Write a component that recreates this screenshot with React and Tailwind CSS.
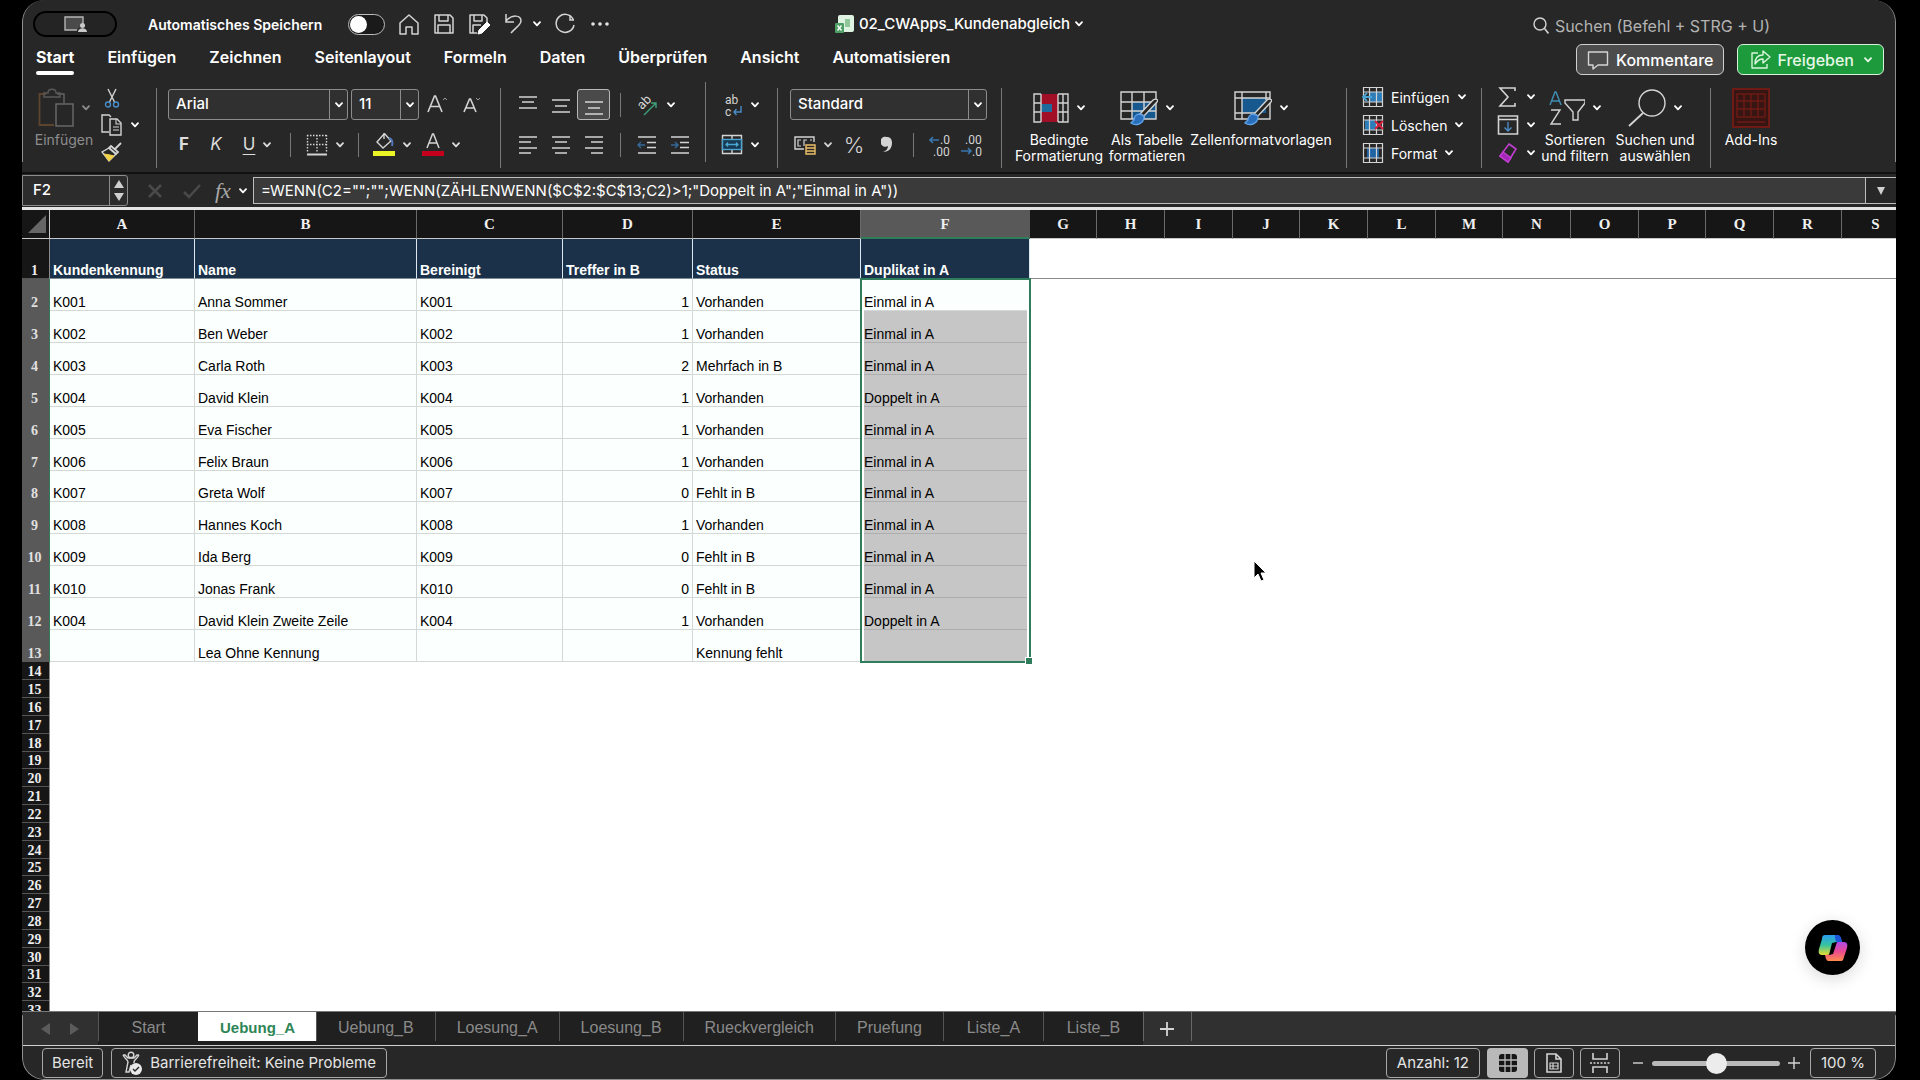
import { useState } from 'react'
import clsx from 'clsx'

const TABS = ['Start', 'Einfügen', 'Zeichnen', 'Seitenlayout', 'Formeln', 'Daten', 'Überprüfen', 'Ansicht', 'Automatisieren']

const SHEETS = ['Start', 'Uebung_A', 'Uebung_B', 'Loesung_A', 'Loesung_B', 'Rueckvergleich', 'Pruefung', 'Liste_A', 'Liste_B']

const COLUMNS = [
  { name: 'A', width: 'w-[145px]' },
  { name: 'B', width: 'w-[222px]' },
  { name: 'C', width: 'w-[146px]' },
  { name: 'D', width: 'w-[130px]' },
  { name: 'E', width: 'w-[168px]' },
  { name: 'F', width: 'w-[169px]' },
  { name: 'G', width: 'w-[67px]' },
  { name: 'H', width: 'w-[68px]' },
  { name: 'I', width: 'w-[68px]' },
  { name: 'J', width: 'w-[67px]' },
  { name: 'K', width: 'w-[68px]' },
  { name: 'L', width: 'w-[68px]' },
  { name: 'M', width: 'w-[67px]' },
  { name: 'N', width: 'w-[68px]' },
  { name: 'O', width: 'w-[68px]' },
  { name: 'P', width: 'w-[67px]' },
  { name: 'Q', width: 'w-[68px]' },
  { name: 'R', width: 'w-[68px]' },
  { name: 'S', width: 'w-[68px]' },
]

const HEADINGS = ['Kundenkennung', 'Name', 'Bereinigt', 'Treffer in B', 'Status', 'Duplikat in A']

const ROWS = [
  ['K001', 'Anna Sommer', 'K001', '1', 'Vorhanden', 'Einmal in A'],
  ['K002', 'Ben Weber', 'K002', '1', 'Vorhanden', 'Einmal in A'],
  ['K003', 'Carla Roth', 'K003', '2', 'Mehrfach in B', 'Einmal in A'],
  ['K004', 'David Klein', 'K004', '1', 'Vorhanden', 'Doppelt in A'],
  ['K005', 'Eva Fischer', 'K005', '1', 'Vorhanden', 'Einmal in A'],
  ['K006', 'Felix Braun', 'K006', '1', 'Vorhanden', 'Einmal in A'],
  ['K007', 'Greta Wolf', 'K007', '0', 'Fehlt in B', 'Einmal in A'],
  ['K008', 'Hannes Koch', 'K008', '1', 'Vorhanden', 'Einmal in A'],
  ['K009', 'Ida Berg', 'K009', '0', 'Fehlt in B', 'Einmal in A'],
  ['K010', 'Jonas Frank', 'K010', '0', 'Fehlt in B', 'Einmal in A'],
  ['K004', 'David Klein Zweite Zeile', 'K004', '1', 'Vorhanden', 'Doppelt in A'],
  ['', 'Lea Ohne Kennung', '', '', 'Kennung fehlt', ''],
]

const EMPTY_ROWS = Array.from({ length: 20 }, (_, i) => i + 14)

/* ═══════════════════════════════════════════════════════════
   ICONS
   ═══════════════════════════════════════════════════════════ */
function Svg({ w = 22, h = 22, children, className }) {
  return (
    <svg width={w} height={h} viewBox={`0 0 ${w} ${h}`} fill="none" stroke="#d4d4d4" strokeWidth="1.4" className={clsx('shrink-0', className)} aria-hidden="true">
      {children}
    </svg>
  )
}

function Chevron({ className }) {
  return (
    <svg width="8" height="6" viewBox="0 0 8 6" fill="none" stroke="currentColor" strokeWidth="1.8" strokeLinecap="round" strokeLinejoin="round" className={clsx('shrink-0', className)} aria-hidden="true">
      <path d="M1 1.2 4 4.4 7 1.2" />
    </svg>
  )
}

function LinesIcon({ rows }) {
  return (
    <Svg w={20} h={20}>
      {rows.map(([x1, x2, y]) => <path key={y} d={`M${x1} ${y}H${x2}`} strokeWidth="1.5" />)}
    </Svg>
  )
}

function PasteIcon() {
  return (
    <Svg w={36} h={40} className="opacity-50">
      <path d="M8 6H1.5V37H16" stroke="#946237" strokeWidth="1.8" />
      <path d="M19 6h7v9" stroke="#a0a0a0" />
      <path d="M6 9V5h4c0-5 8-5 8 0h4v4z" stroke="#8a8a8a" />
      <rect x="18" y="16" width="17" height="22" stroke="#b0b0b0" />
    </Svg>
  )
}

function CutIcon() {
  return (
    <Svg w={16} h={20}>
      <path d="M4 1 10.500 14M12 1 5.500 14" />
      <circle cx="4" cy="16.500" r="2.500" stroke="#4a8cc7" />
      <circle cx="12" cy="16.500" r="2.500" stroke="#4a8cc7" />
    </Svg>
  )
}

function CopyIcon() {
  return (
    <Svg w={22} h={22}>
      <path d="M8 18H1V1h7l2 2" />
      <path d="M9 5h7l4 4v12H9z" />
      <path d="M15 5v5h5M12 13h6M12 16h6" strokeWidth="1.1" />
    </Svg>
  )
}

function BrushIcon() {
  return (
    <Svg w={22} h={20}>
      <path d="M20 1 14 7M10 4l7 6-2 2-7-6z" strokeWidth="1.8" />
      <path d="M8 6 1 10l7 9 7-7z" />
      <path d="M3 12l6 1 4 1-5 5z" fill="#f2d14a" stroke="#f2d14a" strokeWidth="1" />
    </Svg>
  )
}

function GrowFontIcon({ small }) {
  return (
    <Svg w={22} h={22}>
      {small ? <path d="M4 18 9.500 5h1L16 18M6 14h8" strokeWidth="1.6" /> : <path d="M1 18 7.500 2h1L15 18M3.500 12.500h9" strokeWidth="1.6" />}
      {small ? <path d="M16 4l2 2 2-2" strokeWidth="1" stroke="#9a9a9a" /> : <path d="M16 6l2-2 2 2" strokeWidth="1" stroke="#9a9a9a" />}
    </Svg>
  )
}

function BordersIcon() {
  return (
    <Svg w={22} h={22}>
      <path d="M1.500 1v18M20.500 1v18M11 1v18M1 1.500h20M1 10.500h20" strokeDasharray="1.500 1.500" />
      <path d="M1 20.500h20" strokeWidth="2" />
    </Svg>
  )
}

function FillIcon() {
  return (
    <Svg w={22} h={24}>
      <path d="M11 1 4 9l6 6 8-7-7-8v6" />
      <path d="M16 5c3 1 4 4 3 8" stroke="#5276b8" strokeWidth="2" />
      <rect x="0" y="18" width="22" height="5" fill="#ebf525" stroke="none" />
    </Svg>
  )
}

function FontColorIcon() {
  return (
    <Svg w={22} h={24}>
      <path d="M5 15 10.500 1h1L17 15M7 10h8" strokeWidth="1.500" />
      <rect x="0" y="18" width="22" height="5" fill="#c4001d" stroke="none" />
    </Svg>
  )
}

function OrientationIcon() {
  return (
    <Svg w={24} h={24}>
      <text x="10" y="13" textAnchor="middle" transform="rotate(-45 10 10)" fill="#d4d4d4" stroke="none" fontFamily="Roboto" fontSize="13">ab</text>
      <path d="M9 22 21 10M21 15v-5h-5" stroke="#3da17a" />
    </Svg>
  )
}

function WrapIcon() {
  return (
    <Svg w={22} h={26}>
      <g fill="#d4d4d4" stroke="none" fontFamily="Roboto" fontSize="12">
        <text x="4" y="12">ab</text>
        <text x="4" y="24">c</text>
      </g>
      <path d="M20 14v6h-7M15.500 17 13 20l2.500 3" stroke="#4a8cc7" />
    </Svg>
  )
}

function IndentIcon({ out }) {
  return (
    <Svg w={20} h={20}>
      <path d="M1 2h18M10 7.500h9M10 12.500h9M1 18h18" />
      {out ? <path d="M8 10H1M4 7l-3 3 3 3" stroke="#35699a" /> : <path d="M1 10h7M5 7l3 3-3 3" stroke="#35699a" />}
    </Svg>
  )
}

function MergeIcon() {
  return (
    <Svg w={22} h={22}>
      <path d="M1.500 1.500h19v18h-19zM11 1.500v4M11 15.500v4" />
      <rect x="1.500" y="5.500" width="19" height="10" fill="#173a52" stroke="#4aa3d1" />
      <path d="M5 10.500h12M7 8.500l-2 2 2 2M15 8.500l2 2-2 2" stroke="#4aa3d1" />
    </Svg>
  )
}

function CurrencyIcon() {
  return (
    <Svg w={22} h={22}>
      <path d="M10 15H1V3h19v5" />
      <path d="M7 6H4v6h3M13 6h-3v6M16 6h2" strokeWidth="1.200" />
      <path d="M12 11h9v9h-9zM12 14h9M12 17h9" stroke="#eec067" />
    </Svg>
  )
}

function DecimalIcon({ less }) {
  return (
    <svg width="22" height="26" viewBox="0 0 22 26" className="shrink-0" aria-hidden="true">
      <g fill="#d4d4d4" fontFamily="Roboto" fontSize="12">
        <text x={less ? 4 : 11} y="12">{less ? '.00' : '.0'}</text>
        <text x={less ? 11 : 4} y="24">{less ? '.0' : '.00'}</text>
      </g>
      {less
        ? <path d="M0 19h10M7 16l3 3-3 3" fill="none" stroke="#3a75ad" strokeWidth="1.600" />
        : <path d="M10 8H1M4 5 1 8l3 3" fill="none" stroke="#3a75ad" strokeWidth="1.600" />}
    </svg>
  )
}

function CondFormatIcon() {
  return (
    <Svg w={36} h={32}>
      <rect x="8" y="2" width="17" height="28" fill="#a10f26" stroke="none" />
      <rect x="8" y="12" width="11" height="8" fill="#1f6a9c" stroke="none" />
      <path d="M8 2H1v28h7M25 2h10v28H25M1 11h7M25 11h10M1 20h7M25 20h10M8 2v28M25 2v28M30 2v28" />
    </Svg>
  )
}

function TableFormatIcon({ styles }) {
  return (
    <Svg w={38} h={36}>
      {styles
        ? <path d="M8 8h24v15H8z" fill="#17588f" stroke="none" />
        : <path d="M12 12h24v17H12z" fill="#17588f" stroke="none" />}
      <path d={styles ? 'M1 2h35v27H1zM1 8h35M1 23h24M8 2v27M32 2v8' : 'M1 2h35v27H1zM1 12h35M1 21h35M12 2v27M24 2v27'} />
      <path d="M37 12 24 26l-4-2L33 10c3-2 6 0 4 2z" fill="#262626" />
      <path d="M20 24c-4 0-6 3-6 6l-3 3c4 3 13 2 13-7z" fill="#2a6fbb" stroke="#5ea1e6" />
    </Svg>
  )
}

function CellsIcon({ kind }) {
  return (
    <Svg w={22} h={22}>
      {kind === 'insert' && <path d="M8 6h12v10H8z" fill="#2d7db8" stroke="none" />}
      {kind === 'delete' && <path d="M3 6h11v10H3z" fill="#2d7db8" stroke="none" />}
      {kind === 'format' && <path d="M5 6h12v10H5z" fill="#1f63a3" stroke="none" />}
      <path d="M1.500 1.500h19v19h-19zM1 6h20M1 16h20M7.500 1v20M14.500 1v20" strokeWidth="1.200" />
      {kind === 'insert' && <path d="M10 11H1M5 7l-4 4 4 4" stroke="#4aa3d1" strokeWidth="1.800" />}
      {kind === 'delete' && <path d="M13 7l8 8M21 7l-8 8" stroke="#d3213c" strokeWidth="2" />}
    </Svg>
  )
}

function SigmaIcon() {
  return <Svg w={22} h={22}><path d="M18 5V2H3l8 9-8 9h15v-3" strokeWidth="1.600" /></Svg>
}

function FillDownIcon() {
  return (
    <Svg w={22} h={22}>
      <path d="M1.500 2h19v18h-19zM1.500 5.500h19" strokeWidth="1.600" />
      <path d="M11 8v9M7.500 13.500 11 17l3.500-3.500" stroke="#4a8cc7" />
    </Svg>
  )
}

function EraserIcon() {
  return (
    <Svg w={22} h={22}>
      <path d="M12 2l7 5-8 13-8-6z" stroke="#c13fd0" strokeWidth="1.600" />
      <path d="M6 10l8 6-3 4-8-6z" fill="#a526b8" stroke="#c13fd0" />
    </Svg>
  )
}

function SortFilterIcon() {
  return (
    <Svg w={36} h={36}>
      <path d="M1 15 6 2h1l5 13M3 11h7" stroke="#3f8fb5" />
      <path d="M2 20h9L2 34h10" />
      <path d="M16 10h20v3l-7 9v8h-5v-8l-8-9z" />
    </Svg>
  )
}

function FindIcon() {
  return (
    <Svg w={38} h={38}>
      <circle cx="24" cy="14" r="13" />
      <path d="M15 24 1 37" strokeWidth="1.800" />
    </Svg>
  )
}

function AddInsIcon() {
  return (
    <Svg w={38} h={40}>
      <g stroke="#6e1a15">
        <rect x="1" y="1" width="36" height="38" fill="#361513" strokeWidth="2" />
        <rect x="5" y="6" width="28" height="23" />
        <path d="M5 13h28M5 21h28M12 6v23M19 6v23M26 6v23M5 34h28" />
      </g>
    </Svg>
  )
}

function CopilotIcon() {
  return (
    <svg width="30" height="28" viewBox="0 0 30 28" aria-hidden="true">
      <defs>
        <linearGradient id="cp-left" x1="0" y1="0" x2="0" y2="1">
          <stop offset="0" stopColor="#2a9df0" />
          <stop offset="0.5" stopColor="#35c3a0" />
          <stop offset="1" stopColor="#e6dc2f" />
        </linearGradient>
        <linearGradient id="cp-right" x1="0" y1="0" x2="0" y2="1">
          <stop offset="0" stopColor="#b04be8" />
          <stop offset="0.5" stopColor="#ea4a8e" />
          <stop offset="1" stopColor="#ff8a4c" />
        </linearGradient>
      </defs>
      <path d="M7 1h12c2 0 3 1 4 4l1 3h-5c-2 0-3 1-4 3l-2 7c-1 2-2 3-4 3H5c-4 0-5-2-4-6L4 5c0-3 1-4 3-4z" fill="url(#cp-left)" />
      <path d="M17 1h3c2 0 3 2 4 7h-4c-2 0-3-1-3-7z" fill="#1b55d8" />
      <path d="M23 27H11c-2 0-3-1-4-6h3c2 0 3-1 4-3l3-7c0-2 1-3 3-3h5c4 0 5 2 4 6l-3 9c-1 3-1 4-3 4z" fill="url(#cp-right)" />
      <path d="m14 9 5-1-4 12-4 1z" fill="#000" />
    </svg>
  )
}

/* ═══════════════════════════════════════════════════════════
   RIBBON PARTS
   ═══════════════════════════════════════════════════════════ */
function Divider({ short, className }) {
  return <span className={clsx('w-px shrink-0 bg-[#777]', short ? 'h-6' : 'h-20', className)} />
}

function IconButton({ label, menu, className, children }) {
  return (
    <button type="button" aria-label={label} className={clsx('flex shrink-0 items-center justify-center gap-2', className)}>
      {children}
      {menu && <Chevron />}
    </button>
  )
}

function BigButton({ lines, menu = true, className, children }) {
  return (
    <button type="button" className={clsx('flex shrink-0 flex-col items-center text-[14px] leading-[16px] whitespace-nowrap', className)}>
      <span className="mb-1 flex h-10 items-center gap-2">
        {children}
        {menu && <Chevron />}
      </span>
      {lines.map((line) => <span key={line}>{line}</span>)}
    </button>
  )
}

function Combo({ label, value, className }) {
  return (
    <div className={clsx('relative h-[31px] shrink-0', className)}>
      <select aria-label={label} defaultValue={value} className="h-full w-full appearance-none rounded-[3px] border border-[#8c8c8c] bg-[#303030] pl-[7px] text-[15px] font-medium text-white outline-none">
        <option>{value}</option>
      </select>
      <span className="pointer-events-none absolute inset-y-0 right-0 flex w-[19px] items-center justify-center border-l border-[#8c8c8c]">
        <Chevron />
      </span>
    </div>
  )
}

function TitleBar() {
  const [autoSave, setAutoSave] = useState(false)

  return (
    <header className="grid h-11 shrink-0 grid-cols-[1fr_auto_1fr] items-center pt-1">
      <div className="flex items-center">
        <span className="ml-[11px] flex h-[26px] w-[84px] items-center justify-center rounded-full border-2 border-black bg-[#242424]">
          <Svg w={24} h={18}>
            <path d="M14 15H2V2h18v7" fill="#4a4a4a" stroke="#b5b5b5" />
            <circle cx="19.500" cy="10.500" r="2.500" fill="#c9c9c9" stroke="none" />
            <path d="M15 17c0-5 9-5 9 0z" fill="#c9c9c9" stroke="none" />
          </Svg>
        </span>
        <label className="ml-[31px] flex items-center gap-[26px] text-[14px] font-semibold">
          Automatisches Speichern
          <input type="checkbox" checked={autoSave} onChange={(e) => setAutoSave(e.target.checked)} className="peer sr-only" />
          <span className="flex h-[21px] w-[37px] items-center rounded-full border border-[#bdbdbd] bg-[#1a1a1a] px-px">
            <span className={clsx('size-[17px] rounded-full bg-white', autoSave && 'ml-auto')} />
          </span>
        </label>
        <div className="ml-[13px] flex items-center gap-[13px]">
          <IconButton label="Startseite">
            <Svg><path d="M2 10 11 2l9 8v11h-6v-7H8v7H2z" strokeWidth="1.500" strokeLinejoin="round" /></Svg>
          </IconButton>
          <IconButton label="Speichern">
            <Svg>
              <path d="M2 2h15l3 3v15H2zM6 2v6h9V2M5 20v-8h12v8" strokeWidth="1.500" strokeLinejoin="round" />
            </Svg>
          </IconButton>
          <IconButton label="Speichern unter">
            <Svg>
              <path d="M9 20H2V2h14l3 3v4M6 2v6h8V2M5 20v-8h8" strokeWidth="1.500" strokeLinejoin="round" />
              <path d="M10 21l1-4 8-8 3 3-8 8z" fill="#fff" stroke="#fff" strokeWidth="1" />
            </Svg>
          </IconButton>
          <IconButton label="Rückgängig" menu>
            <Svg><path d="M3 1v8h8M3 8c6-7 15-6 15 0 0 4-6 7-10 12" strokeWidth="1.500" /></Svg>
          </IconButton>
          <IconButton label="Wiederholen">
            <Svg><path d="M16 2v5h4M19.500 7A9 9 0 1 0 20 12" strokeWidth="1.500" /></Svg>
          </IconButton>
          <IconButton label="Mehr">
            <Svg>
              <g fill="#e5e5e5" stroke="none">
                <circle cx="4" cy="11" r="1.800" />
                <circle cx="11" cy="11" r="1.800" />
                <circle cx="18" cy="11" r="1.800" />
              </g>
            </Svg>
          </IconButton>
        </div>
      </div>

      <button type="button" className="flex items-center gap-[5px] text-[15px] font-medium">
        <svg width="19" height="18" viewBox="0 0 19 18" aria-hidden="true">
          <rect x="3" y="0" width="16" height="17" rx="2" fill="#dff3e3" />
          <rect x="10" y="4" width="5" height="8" fill="#8fc79b" />
          <rect x="0" y="8" width="9" height="10" rx="1" fill="#4d9e62" />
          <path d="m2.500 10.500 4 5M6.500 10.500l-4 5" stroke="#fff" strokeWidth="1.300" />
        </svg>
        <span>02_CWApps_Kundenabgleich</span>
        <Chevron />
      </button>

      <button type="button" className="mr-[126px] flex items-center gap-[6px] justify-self-end pt-1 text-[16px] text-[#b3b3b3]">
        <Svg w={16} h={18}><circle cx="7" cy="7" r="6" /><path d="m11.500 11.500 4 5" strokeWidth="1.600" /></Svg>
        Suchen (Befehl + STRG + U)
      </button>
    </header>
  )
}

function TabBar() {
  return (
    <div className="flex h-[38px] shrink-0 items-start justify-between pr-3 pl-[14px]">
      <nav className="flex gap-[33px] text-[16px] leading-[26px] font-semibold">
        {TABS.map((tab, i) => (
          <a key={tab} href="#ribbon" className={clsx('flex flex-col', i === 0 && 'font-bold')}>
            {tab}
            {i === 0 && <span className="mt-px h-1 rounded-full bg-white" />}
          </a>
        ))}
      </nav>
      <div className="flex gap-[13px] text-[16px] font-medium">
        <button type="button" className="flex h-[31px] items-center gap-[7px] rounded-[6px] border border-[#d0d0d0] bg-[#4c4c4c] px-[10px]">
          <Svg w={22} h={20}><path d="M1.500 2h19v13H11l-5 4v-4H1.500z" strokeLinejoin="round" /></Svg>
          Kommentare
        </button>
        <button type="button" className="flex h-[31px] items-center gap-[6px] rounded-[6px] border border-[#d6f0da] bg-[#1c9a3c] px-[11px] text-[#e6f7e6]">
          <Svg w={22} h={20}>
            <g stroke="#d9f5dc" strokeLinejoin="round">
              <path d="M9 3H3v15h15v-4" />
              <path d="M14 1l7 6-7 6V9c-4 0-6 2-8 5 0-6 3-9 8-9z" />
            </g>
          </Svg>
          Freigeben
          <Chevron className="ml-1" />
        </button>
      </div>
    </div>
  )
}

function Ribbon() {
  return (
    <section id="ribbon" aria-label="Start" className="flex h-[90px] shrink-0 items-start pt-[6px]">
      {/* Clipboard */}
      <BigButton lines={['Einfügen']} className="ml-[13px] w-[58px] text-[#8d8d8d]">
        <PasteIcon />
      </BigButton>
      <div className="mr-[15px] ml-2 flex w-[40px] flex-col items-start gap-[6px]">
        <IconButton label="Ausschneiden" className="w-[22px]"><CutIcon /></IconButton>
        <IconButton label="Kopieren" menu><CopyIcon /></IconButton>
        <IconButton label="Format übertragen" className="w-[22px]"><BrushIcon /></IconButton>
      </div>
      <Divider />

      {/* Font */}
      <div className="flex w-[343px] flex-col gap-[10px] pt-px pl-[11px]">
        <div className="flex items-center gap-[3px]">
          <Combo label="Schriftart" value="Arial" className="w-[180px]" />
          <Combo label="Schriftgrad" value="11" className="w-[68px]" />
          <IconButton label="Schriftart vergrößern" className="w-8"><GrowFontIcon /></IconButton>
          <IconButton label="Schriftart verkleinern" className="w-7"><GrowFontIcon small /></IconButton>
        </div>
        <div className="flex h-[30px] items-center text-[17px] text-[#dcdcdc]">
          <IconButton label="Fett" className="w-8 font-bold">F</IconButton>
          <IconButton label="Kursiv" className="w-8 italic">K</IconButton>
          <IconButton label="Unterstrichen" menu className="w-[46px] pl-1"><span className="underline underline-offset-4">U</span></IconButton>
          <span className="mr-[15px] ml-3 flex"><Divider short /></span>
          <IconButton label="Rahmen" menu><BordersIcon /></IconButton>
          <span className="mx-[14px] flex"><Divider short /></span>
          <IconButton label="Füllfarbe" menu><FillIcon /></IconButton>
          <IconButton label="Schriftfarbe" menu className="ml-[11px]"><FontColorIcon /></IconButton>
        </div>
      </div>
      <Divider />

      {/* Alignment */}
      <div className="flex w-[204px] flex-col gap-[10px] pt-px pl-[10px]">
        <div className="flex h-[31px] items-center">
          <IconButton label="Oben ausrichten" className="w-[33px]"><LinesIcon rows={[[1, 19, 2], [4, 16, 7], [1, 19, 13]]} /></IconButton>
          <IconButton label="Zentriert ausrichten" className="w-[33px]"><LinesIcon rows={[[1, 19, 5], [4, 16, 11], [1, 19, 17]]} /></IconButton>
          <IconButton label="Unten ausrichten" className="h-[31px] w-[33px] rounded-[3px] border border-[#b8b8b8] bg-[#4a4a4a]"><LinesIcon rows={[[1, 19, 7], [4, 16, 13], [1, 19, 19]]} /></IconButton>
          <span className="mr-[14px] ml-[10px] flex"><Divider short /></span>
          <IconButton label="Ausrichtung" menu><OrientationIcon /></IconButton>
        </div>
        <div className="flex h-[30px] items-center">
          <IconButton label="Linksbündig" className="w-[33px]"><LinesIcon rows={[[1, 19, 2], [1, 13, 7], [1, 19, 13], [1, 13, 18]]} /></IconButton>
          <IconButton label="Zentriert" className="w-[33px]"><LinesIcon rows={[[1, 19, 2], [4, 16, 7], [1, 19, 13], [4, 16, 18]]} /></IconButton>
          <IconButton label="Rechtsbündig" className="w-[33px]"><LinesIcon rows={[[1, 19, 2], [7, 19, 7], [1, 19, 13], [7, 19, 18]]} /></IconButton>
          <span className="mr-4 ml-[10px] flex"><Divider short /></span>
          <IconButton label="Einzug verkleinern"><IndentIcon out /></IconButton>
          <IconButton label="Einzug vergrößern" className="ml-[13px]"><IndentIcon /></IconButton>
        </div>
      </div>
      <Divider className="-mt-[6px]" />
      <div className="flex w-[71px] flex-col gap-[10px] pt-px pl-[15px]">
        <IconButton label="Textumbruch" menu className="h-[31px] self-start"><WrapIcon /></IconButton>
        <IconButton label="Verbinden und zentrieren" menu className="h-[30px] self-start"><MergeIcon /></IconButton>
      </div>
      <Divider />

      {/* Number */}
      <div className="flex w-[223px] flex-col gap-[10px] pt-px pl-3">
        <Combo label="Zahlenformat" value="Standard" className="w-[197px]" />
        <div className="flex h-[30px] items-center pl-1 text-[#d4d4d4]">
          <IconButton label="Währung" menu><CurrencyIcon /></IconButton>
          <IconButton label="Prozent" className="ml-[6px] w-8 text-[22px] font-light">%</IconButton>
          <IconButton label="Tausendertrennzeichen" className="w-[33px]">
            <Svg w={12} h={18}><path d="M6 1a5 5 0 1 0 1 9c0 3-2 5-5 6 6 0 9-4 9-9 0-4-2-6-5-6z" fill="#d4d4d4" stroke="none" /></Svg>
          </IconButton>
          <span className="mr-[15px] ml-[10px] flex"><Divider short /></span>
          <IconButton label="Dezimalstelle hinzufügen"><DecimalIcon /></IconButton>
          <IconButton label="Dezimalstelle entfernen" className="ml-[10px]"><DecimalIcon less /></IconButton>
        </div>
      </div>
      <Divider />

      {/* Styles */}
      <div className="mr-[15px] ml-[13px] flex gap-[6px]">
        <BigButton lines={['Bedingte', 'Formatierung']} className="w-[88px]"><CondFormatIcon /></BigButton>
        <BigButton lines={['Als Tabelle', 'formatieren']} className="w-[76px]"><TableFormatIcon /></BigButton>
        <BigButton lines={['Zellenformatvorlagen']} className="w-[140px]"><TableFormatIcon styles /></BigButton>
      </div>
      <Divider />

      {/* Cells */}
      <div className="-mt-[5px] flex w-[134px] flex-col pl-[15px] text-[14px]">
        {[['insert', 'Einfügen'], ['delete', 'Löschen'], ['format', 'Format']].map(([kind, label]) => (
          <button key={kind} type="button" className="flex h-7 items-center">
            <CellsIcon kind={kind} />
            <span className="mr-2 ml-[7px]">{label}</span>
            <Chevron />
          </button>
        ))}
      </div>
      <Divider />

      {/* Editing */}
      <div className="-mt-[5px] flex w-[58px] flex-col items-start pl-[15px]">
        <IconButton label="AutoSumme" menu className="h-7"><SigmaIcon /></IconButton>
        <IconButton label="Ausfüllen" menu className="h-7"><FillDownIcon /></IconButton>
        <IconButton label="Löschen" menu className="h-7"><EraserIcon /></IconButton>
      </div>
      <BigButton lines={['Sortieren', 'und filtern']} className="w-[70px]"><SortFilterIcon /></BigButton>
      <BigButton lines={['Suchen und', 'auswählen']} className="mr-[14px] ml-1 w-[82px]"><FindIcon /></BigButton>
      <Divider />
      <BigButton lines={['Add-Ins']} menu={false} className="ml-[13px] w-[54px]"><AddInsIcon /></BigButton>
    </section>
  )
}

function FormulaBar() {
  return (
    <div className="flex h-[38px] shrink-0 items-center border-t-2 border-b-3 border-t-[#111] border-b-[#e4e4e4]">
      <div className="flex h-[31px] w-[106px] items-stretch rounded-r-[3px] border border-[#8c8c8c] bg-[#2c2c2c]">
        <input aria-label="Namenfeld" defaultValue="F2" className="w-[86px] bg-transparent pl-[10px] text-[15px] font-medium outline-none" />
        <div className="flex flex-1 flex-col items-center justify-between border-l border-[#8c8c8c] py-1">
          <svg width="10" height="8" viewBox="0 0 10 8" fill="#d0d0d0" aria-hidden="true"><path d="M5 0l5 8H0z" /></svg>
          <svg width="10" height="8" viewBox="0 0 10 8" fill="#d0d0d0" aria-hidden="true"><path d="M5 8L0 0h10z" /></svg>
        </div>
      </div>
      <div className="flex w-[125px] items-center pl-[19px]">
        <IconButton label="Abbrechen"><Svg w={16} h={16}><path d="m2 2 12 12M14 2 2 14" stroke="#4a4a4a" strokeWidth="2.500" /></Svg></IconButton>
        <IconButton label="Eingeben" className="ml-5"><Svg w={18} h={16}><path d="m1 9 5 5L17 2" stroke="#4a4a4a" strokeWidth="2.500" /></Svg></IconButton>
        <IconButton label="Funktion einfügen" className="ml-[14px] font-['Liberation_Serif',serif] text-[22px] leading-[24px] text-[#a8a8a8] italic">fx</IconButton>
        <Chevron className="ml-2" />
      </div>
      <input
        aria-label="Bearbeitungsleiste"
        defaultValue={'=WENN(C2="";"";WENN(ZÄHLENWENN($C$2:$C$13;C2)>1;"Doppelt in A";"Einmal in A"))'}
        className="h-[27px] min-w-0 flex-1 border border-[#bdbdbd] bg-[#3a3a3a] pl-[7px] text-[15px] outline-none"
      />
      <button type="button" aria-label="Bearbeitungsleiste erweitern" className="flex h-[27px] w-[30px] items-center justify-center border-y border-[#bdbdbd]">
        <svg width="8" height="8" viewBox="0 0 8 8" fill="#d0d0d0" aria-hidden="true"><path d="M4 8L0 0h8z" /></svg>
      </button>
    </div>
  )
}

/* ═══════════════════════════════════════════════════════════
   SHEET
   ═══════════════════════════════════════════════════════════ */
function RowHead({ n, selected }) {
  return (
    <th
      scope="row"
      className={clsx(
        'overflow-hidden border-r p-0 pr-[2px] text-center align-bottom font-["Liberation_Serif",serif] text-[14px] leading-[17px] font-bold',
        selected ? 'border-[#2f7d5b] bg-[#595959] text-[#e0e0e0]' : 'border-[#8a8a8a] bg-[#161616] text-[#ededed] shadow-[inset_0_-1px_0_#555]',
      )}
    >
      {n}
    </th>
  )
}

function Sheet() {
  return (
    <main className="relative min-h-0 flex-1 overflow-hidden bg-white">
      <table className="w-[1887px] table-fixed border-separate border-spacing-0 font-['Liberation_Sans',Arial,sans-serif] text-[14px] leading-[16px] text-black">
        <colgroup>
          <col className="w-[28px]" />
          {COLUMNS.map((col) => <col key={col.name} className={col.width} />)}
        </colgroup>
        <thead>
          <tr className="h-[29px] bg-[#161616] font-['Liberation_Serif',serif] text-[15px] text-[#f0f0f0]">
            <td className="border-r border-b border-[#c8c8c8] p-0">
              <svg width="20" height="20" viewBox="0 0 20 20" fill="#666" className="ml-[5px]" aria-hidden="true"><path d="M19 1v18H1z" /></svg>
            </td>
            {COLUMNS.map(({ name }) => (
              <th
                key={name}
                scope="col"
                className={clsx(
                  'border-r p-0 font-bold',
                  name === 'F' ? 'border-b-2 border-r-[#595959] border-b-[#2f7d5b] bg-[#595959]' : 'border-b border-r-[#6a6a6a] border-b-[#c8c8c8]',
                )}
              >
                {name}
              </th>
            ))}
          </tr>
        </thead>
        <tbody>
          <tr className="h-[40px]">
            <RowHead n={1} />
            {HEADINGS.map((text) => (
              <td key={text} className="border-r border-b border-r-[#dbe6ee] border-b-[#7d8c96] bg-[#1a3149] p-0 pl-[3px] align-bottom font-bold text-white">
                {text}
              </td>
            ))}
            <td colSpan={13} className="border-b border-[#8a8a8a] p-0" />
          </tr>
          {ROWS.map((row, r) => (
            <tr key={r} className={r === 6 ? 'h-[31px]' : 'h-8'}>
              <RowHead n={r + 2} selected />
              {row.map((text, c) => (
                <td
                  key={c}
                  className={clsx(
                    'border-r border-b p-0 px-[3px] align-bottom',
                    c === 3 && 'text-right',
                    c === 5 && r > 0 ? 'border-[#adadad] bg-[#c6c6c6]' : 'border-[#d4d8d7] bg-[#fbfffe]',
                  )}
                >
                  {text}
                </td>
              ))}
              <td colSpan={13} className="p-0" />
            </tr>
          ))}
          {EMPTY_ROWS.map((n) => (
            <tr key={n} className={n % 6 === 1 ? 'h-[17px]' : 'h-[18px]'}>
              <RowHead n={n} />
              <td colSpan={19} className="p-0" />
            </tr>
          ))}
        </tbody>
      </table>

      {/* Selection frame around F2:F13 with its fill handle */}
      <div className="pointer-events-none absolute top-[68px] left-[838px] h-[385px] w-[171px] border-2 border-[#2f7d5b]">
        <div className="h-full w-full border-x-2 border-white" />
        <span className="absolute -right-[4px] -bottom-[4px] size-[8px] border border-white bg-[#2f7d5b]" />
      </div>

      {/* Mouse pointer */}
      <svg width="14" height="22" viewBox="0 0 14 22" className="absolute top-[350px] left-[1231px]" aria-hidden="true">
        <path d="M1 1v17l4-4 3 7 3-1-3-7h5z" fill="#000" stroke="#fff" strokeWidth="1" />
      </svg>

      <button type="button" aria-label="Copilot" className="absolute right-[36px] bottom-[36px] flex size-[55px] items-center justify-center rounded-full bg-black shadow-[0_4px_16px_rgba(0,0,0,0.15)]">
        <CopilotIcon />
      </button>
    </main>
  )
}

function SheetTabs() {
  const [active, setActive] = useState('Uebung_A')

  return (
    <nav className="flex h-[34px] shrink-0 items-start border-t border-[#777] bg-[#303030] font-['Liberation_Sans',Arial,sans-serif]">
      <div className="flex h-[29px] w-[76px] items-center justify-center gap-5 pt-1">
        <svg width="9" height="12" viewBox="0 0 9 12" fill="#5c5c5c" aria-hidden="true"><path d="M9 0v12L0 6z" /></svg>
        <svg width="9" height="12" viewBox="0 0 9 12" fill="#5c5c5c" aria-hidden="true"><path d="M0 0v12l9-6z" /></svg>
      </div>
      <div className="flex h-full bg-[#202020]">
        {SHEETS.map((name) => (
          <button
            key={name}
            type="button"
            onClick={() => setActive(name)}
            className={clsx(
              'h-[29px] min-w-[100px] border-l px-[21px] pt-[3px]',
              name === active ? 'border-white bg-white text-[15px] font-bold text-[#2e8555]' : 'border-[#555] text-[16px] text-[#8a8a8a]',
            )}
          >
            {name}
          </button>
        ))}
      </div>
      <button type="button" aria-label="Neues Blatt" className="flex h-[29px] w-[49px] items-center justify-center border-x border-[#666] pt-1">
        <Svg w={14} h={14}><path d="M7 0v14M0 7h14" strokeWidth="1.800" /></Svg>
      </button>
    </nav>
  )
}

function StatusBar() {
  const [zoom, setZoom] = useState(100)
  const box = 'flex h-[30px] items-center justify-center rounded-[4px] border border-[#a8a8a8]'

  return (
    <footer className="flex h-[35px] shrink-0 items-center border-t border-[#d0d0d0] pr-5 pl-5 text-[15px] text-[#e4e4e4]">
      <button type="button" className={clsx(box, 'px-[9px]')}>Bereit</button>
      <button type="button" className={clsx(box, 'ml-2 gap-2 px-[10px]')}>
        <Svg w={20} h={24}>
          <circle cx="9" cy="4" r="2.800" />
          <path d="M1 4c2 4 5 5 5 7l-2 10h3l2-7M17 4c-2 4-5 5-5 7v1M1 4h2l3 3h6l3-3h2" />
          <circle cx="14" cy="18" r="6" fill="#e9e9e9" stroke="none" />
          <path d="m11 18 2 2 4-4" stroke="#262626" />
        </Svg>
        Barrierefreiheit: Keine Probleme
      </button>
      <button type="button" className={clsx(box, 'ml-auto px-[10px]')}>Anzahl: 12</button>
      <button type="button" aria-label="Normal" className="ml-[7px] flex h-[30px] w-[41px] items-center justify-center rounded-[4px] bg-[#b9b9b9]">
        <Svg w={20} h={20}>
          <rect x="1" y="1" width="18" height="18" rx="3" fill="#161616" stroke="none" />
          <path d="M7 1v18M13 1v18M1 7h18M1 13h18" stroke="#b9b9b9" strokeWidth="1.300" />
        </Svg>
      </button>
      <button type="button" aria-label="Seitenlayout" className={clsx(box, 'ml-[6px] w-[40px]')}>
        <Svg w={16} h={20}>
          <path d="M1 1h9l5 5v13H1zM10 1v5h5" strokeWidth="1.600" />
          <path d="M4 10h8v6H4zM4 13h8M7 10v6" strokeWidth="1.200" />
        </Svg>
      </button>
      <button type="button" aria-label="Umbruchvorschau" className={clsx(box, 'ml-[6px] w-[40px]')}>
        <Svg w={20} h={22}>
          <path d="M3 1v6h14V1M3 21v-6h14v6" strokeWidth="1.600" />
          <path d="M0 11h20" strokeDasharray="2 1.500" />
        </Svg>
      </button>
      <button type="button" aria-label="Verkleinern" className="ml-[12px] flex w-3 justify-center">
        <Svg w={10} h={10}><path d="M0 5h10" /></Svg>
      </button>
      <input
        type="range"
        aria-label="Zoom"
        min="0"
        max="200"
        value={zoom}
        onChange={(e) => setZoom(e.target.value)}
        className="mx-2 h-[22px] w-[128px] appearance-none bg-transparent [&::-webkit-slider-runnable-track]:h-[5px] [&::-webkit-slider-runnable-track]:rounded-full [&::-webkit-slider-runnable-track]:bg-[#b9b9b9] [&::-webkit-slider-thumb]:-mt-[8px] [&::-webkit-slider-thumb]:size-[21px] [&::-webkit-slider-thumb]:appearance-none [&::-webkit-slider-thumb]:rounded-full [&::-webkit-slider-thumb]:bg-[#ececec]"
      />
      <button type="button" aria-label="Vergrößern" className="mr-[10px] flex w-3 justify-center">
        <Svg w={12} h={12}><path d="M0 6h12M6 0v12" /></Svg>
      </button>
      <button type="button" className={clsx(box, 'w-[66px] whitespace-nowrap')}>100 %</button>
    </footer>
  )
}

export default function App() {
  return (
    <div className="h-screen bg-black pr-6 pl-[22px] font-[Inter,sans-serif] text-white">
      <div className="relative flex h-full flex-col overflow-hidden rounded-[22px] bg-[#272727]">
        <TitleBar />
        <TabBar />
        <Ribbon />
        <FormulaBar />
        <Sheet />
        <SheetTabs />
        <StatusBar />
        {/* Window outline */}
        <div className="pointer-events-none absolute inset-0 rounded-[22px] border-x border-b border-[#8f8f8f] [clip-path:polygon(0_0,100%_0,100%_15%,99%_15%,99%_94%,100%_94%,100%_100%,0_100%,0_94%,1%_94%,1%_15%,0_15%)]" />
      </div>
    </div>
  )
}
